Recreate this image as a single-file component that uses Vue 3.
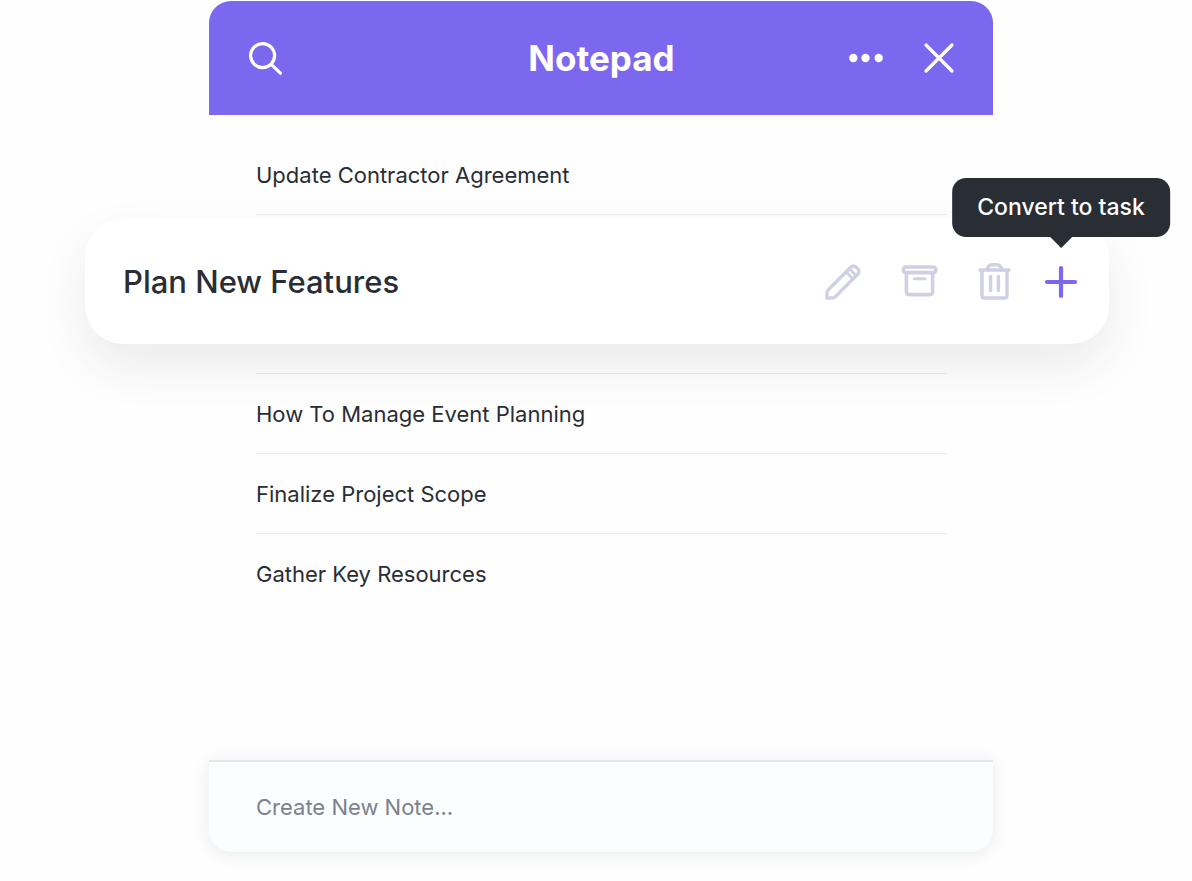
<script setup>
import { computed, ref } from 'vue'

const notes = ref([
  { id: 1, title: 'Update Contractor Agreement' },
  { id: 2, title: 'Plan New Features', active: true },
  { id: 3, title: 'How To Manage Event Planning' },
  { id: 4, title: 'Finalize Project Scope' },
  { id: 5, title: 'Gather Key Resources' }
])

const draft = ref('')

const nextId = computed(() => Math.max(0, ...notes.value.map(note => note.id)) + 1)

function addNote() {
  const title = draft.value.trim()
  if (!title) return
  notes.value.push({ id: nextId.value, title })
  draft.value = ''
}

function removeNote(id) {
  notes.value = notes.value.filter(note => note.id !== id)
}
</script>

<template>
  <main class="page">
    <section class="notepad">
      <header class="header">
        <button class="icon-btn" type="button" aria-label="Search">
          <svg width="34" height="34" viewBox="0 0 34 34" fill="none" stroke="currentColor" stroke-width="3.2" stroke-linecap="round">
            <circle cx="13.6" cy="14.6" r="12" />
            <path d="M22.4 23.6L31.4 32.2" />
          </svg>
        </button>
        <h1 class="title">Notepad</h1>
        <div class="header-actions">
          <button class="icon-btn" type="button" aria-label="More">
            <svg width="34" height="34" viewBox="0 0 34 34" fill="currentColor">
              <circle cx="4.3" cy="17" r="4.2" />
              <circle cx="16.5" cy="17" r="4.2" />
              <circle cx="29.7" cy="17" r="4.2" />
            </svg>
          </button>
          <button class="icon-btn" type="button" aria-label="Close">
            <svg width="30" height="30" viewBox="0 0 30 30" fill="none" stroke="currentColor" stroke-width="3.2" stroke-linecap="round">
              <path d="M2 2L28 28M28 2L2 28" />
            </svg>
          </button>
        </div>
      </header>

      <ul class="notes">
        <li v-for="note in notes" :key="note.id" class="note" :class="{ active: note.active }">
          <div v-if="note.active" class="card">
            <h2 class="card-title">{{ note.title }}</h2>
            <div class="tools">
              <button class="icon-btn" type="button" aria-label="Edit">
                <svg width="36" height="36" viewBox="0 0 36 36" fill="none" stroke="currentColor" stroke-width="3.4" stroke-linejoin="round">
                  <path d="M2 34V29Q2 27 3.4 25.6L25.7 3.3Q28.5 0.8 31.3 3.3L32.7 4.7Q35.2 7.5 32.7 10.3L10.4 32.6Q9 34 7 34Z" />
                  <path d="M21.3 8.2L27.8 14.7M24.6 5L31 11.4" stroke-width="2.8" />
                </svg>
              </button>
              <button class="icon-btn" type="button" aria-label="Archive">
                <svg width="36" height="36" viewBox="0 0 36 36" fill="none" stroke="currentColor" stroke-width="3.6" stroke-linecap="round" stroke-linejoin="round">
                  <rect x="2.4" y="3" width="32.4" height="5.6" rx="2.5" />
                  <path d="M5.4 9V27.5Q5.4 30.6 8.5 30.6H28.5Q31.6 30.6 31.6 27.5V9" />
                  <path d="M13.2 14.8H24" stroke-width="3" />
                </svg>
              </button>
              <button class="icon-btn" type="button" aria-label="Delete" @click="removeNote(note.id)">
                <svg width="36" height="36" viewBox="0 0 36 36" fill="none" stroke="currentColor" stroke-width="3.4" stroke-linecap="round" stroke-linejoin="round">
                  <path d="M3 6H32M5 6V31.5Q5 34 7.5 34H27.5Q30 34 30 31.5V6" />
                  <path d="M10.4 6Q11 0.8 15 0.8H20Q24 0.8 24.6 6" />
                  <path d="M13.6 12.5V26.5M21.4 12.5V26.5" />
                </svg>
              </button>
              <div class="convert">
                <button class="icon-btn" type="button" aria-describedby="convert-tip" aria-label="Convert to task">
                  <svg width="36" height="36" viewBox="0 0 36 36" fill="none" stroke="currentColor" stroke-width="4.2" stroke-linecap="round">
                    <path d="M18 4V32M4 18H32" />
                  </svg>
                </button>
                <span id="convert-tip" class="tooltip" role="tooltip">Convert to task</span>
              </div>
            </div>
          </div>
          <span v-else>{{ note.title }}</span>
        </li>
      </ul>

      <form class="create" @submit.prevent="addNote">
        <input v-model="draft" class="create-input" type="text" aria-label="Create new note" placeholder="Create New Note..." />
      </form>
    </section>
  </main>
</template>

<style>
body {
  margin: 0;
  background: #fefefe;
}
</style>

<style scoped>
.page {
  box-sizing: border-box;
  min-height: 100vh;
  padding: 1px 83px 28px 85px;
  overflow: hidden;
  font-family: Inter, "Liberation Sans", sans-serif;
  color: #292d34;
}

.notepad {
  display: flex;
  flex-direction: column;
  margin: 0 116px 0 124px;
}

.header {
  display: grid;
  grid-template-columns: 1fr auto 1fr;
  align-items: center;
  padding: 36px 39px 36px 40px;
  border-radius: 22px 22px 0 0;
  background: #7b68ee;
  color: #fff;
}

.title {
  margin: 0;
  font-size: 35px;
  font-weight: 700;
  line-height: 42px;
}

.header-actions {
  display: flex;
  align-items: center;
  justify-content: flex-end;
  gap: 41px;
}

.icon-btn {
  display: flex;
  justify-self: start;
  padding: 0;
  border: 0;
  background: none;
  color: inherit;
  cursor: pointer;
}

.icon-btn svg { overflow: visible; }

.notes {
  margin: 0;
  padding: 20px 46px 146px 47px;
  list-style: none;
}

.note {
  padding: 24px 0 23px;
  border-bottom: 1px solid #ebedef;
  font-size: 22px;
  line-height: 32px;
}

.note:last-child { border-bottom-color: transparent; }

.note.active {
  padding: 4px 0 29px;
}

/* the active note is wider than the notepad itself */
.card {
  position: relative;
  z-index: 1;
  display: flex;
  align-items: center;
  justify-content: space-between;
  margin: 0 -162px 0 -171px;
  padding: 45px 30px 44px 38px;
  border-radius: 38px;
  background: #fff;
  box-shadow: 0 22px 48px rgba(41, 45, 52, 0.09);
}

.card-title {
  margin: 0;
  font-size: 31px;
  font-weight: 500;
  line-height: 36px;
}

.tools {
  display: flex;
  align-items: center;
  gap: 40px;
  color: #d0d0e3;
}

.convert {
  position: relative;
  margin-left: -10px;
  color: #7b68ee;
}

.tooltip {
  position: absolute;
  bottom: 63px;
  left: 50%;
  padding: 14px 25px;
  border-radius: 14px;
  background: #292d34;
  color: #fff;
  font-size: 23px;
  font-weight: 500;
  line-height: 31px;
  white-space: nowrap;
  transform: translateX(-50%);
}

.tooltip::after {
  content: "";
  position: absolute;
  top: 100%;
  left: 50%;
  border: 11px solid transparent;
  border-top-color: #292d34;
  border-bottom: 0;
  transform: translateX(-50%);
}

.create {
  border-top: 2px solid #e4e7ea;
  border-radius: 0 0 22px 22px;
  background: #fafefe;
  box-shadow: 0 2px 16px rgba(41, 45, 52, 0.1);
}

.create-input {
  box-sizing: border-box;
  display: block;
  width: 100%;
  padding: 29px 47px;
  border: 0;
  background: none;
  outline: none;
  color: #292d34;
  font-family: inherit;
  font-size: 22px;
  line-height: 32px;
}

.create-input::placeholder {
  color: #7c828d;
  opacity: 1;
}
</style>
